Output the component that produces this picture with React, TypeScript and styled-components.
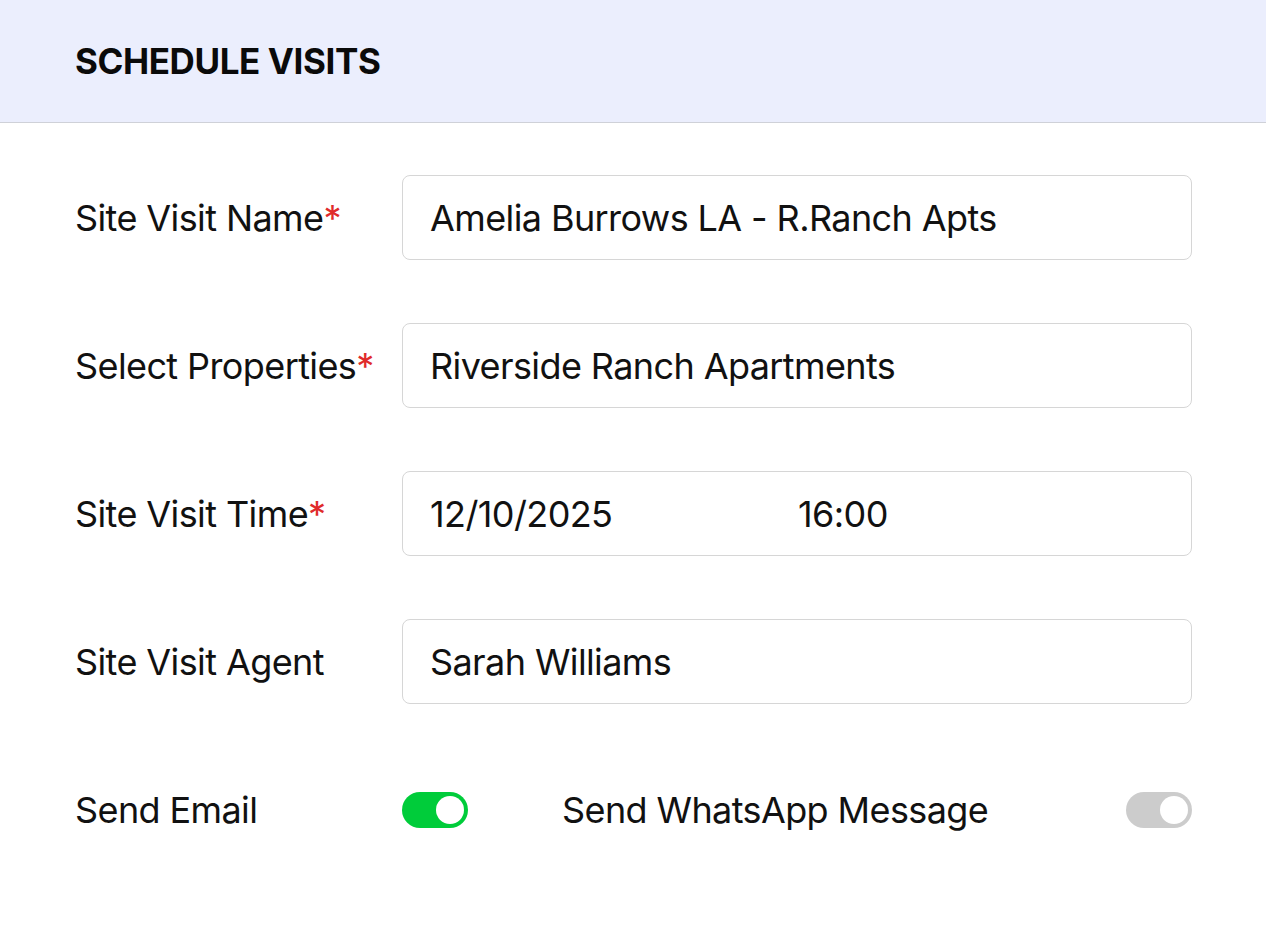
import React from "react";
import styled, { createGlobalStyle } from "styled-components";

const GlobalStyle = createGlobalStyle`
  html, body {
    margin: 0;
    padding: 0;
    background: #ffffff;
    font-family: Inter, "Noto Sans", sans-serif;
    color: #111111;
  }
`;

const fields = [
  { label: "Site Visit Name", required: true, value: "Amelia Burrows LA - R.Ranch Apts" },
  { label: "Select Properties", required: true, value: "Riverside Ranch Apartments" },
  { label: "Site Visit Time", required: true, date: "12/10/2025", time: "16:00" },
  { label: "Site Visit Agent", required: false, value: "Sarah Williams" },
];

const App = () => {
  return (
    <>
      <GlobalStyle />
      <Page>
        <Header>
          <Title>SCHEDULE VISITS</Title>
        </Header>
        <Form>
          {fields.map((f) => (
            <Row key={f.label}>
              <Label>
                {f.label}
                {f.required && <Star>*</Star>}
              </Label>
              <InputBox>
                {f.date ? (
                  <>
                    <DatePart>{f.date}</DatePart>
                    <span>{f.time}</span>
                  </>
                ) : (
                  f.value
                )}
              </InputBox>
            </Row>
          ))}
          <Row>
            <Label>Send Email</Label>
            <ToggleGroup>
              <Toggle $on />
              <ToggleLabel>Send WhatsApp Message</ToggleLabel>
              <Toggle />
            </ToggleGroup>
          </Row>
        </Form>
      </Page>
    </>
  );
};

export default App;

const Page = styled.div`
  width: 1266px;
  min-height: 945px;
  background: #ffffff;
`;

const Header = styled.div`
  height: 122px;
  background: #ebeefd;
  border-bottom: 1px solid #cfd1d8;
  display: flex;
  align-items: center;
  padding-left: 75px;
`;

const Title = styled.h1`
  margin: 0;
  font-size: 35px;
  font-weight: 700;
  letter-spacing: -0.4px;
  color: #0a0a0a;
`;

const Form = styled.div`
  display: flex;
  flex-direction: column;
  gap: 63px;
  padding: 52px 74px 0 75px;
`;

const Row = styled.div`
  display: grid;
  grid-template-columns: 327px 1fr;
  align-items: center;
  height: 85px;
`;

const Label = styled.div`
  font-size: 36px;
  letter-spacing: -0.6px;
  color: #111111;
`;

const Star = styled.span`
  color: #e02b2b;
`;

const InputBox = styled.div`
  box-sizing: border-box;
  height: 85px;
  border: 1.5px solid #d6d6d6;
  border-radius: 8px;
  display: flex;
  align-items: center;
  padding-left: 27px;
  font-size: 36px;
  letter-spacing: -0.6px;
  color: #111111;
`;

const DatePart = styled.span`
  width: 368px;
`;

const ToggleGroup = styled.div`
  display: flex;
  align-items: center;
`;

const ToggleLabel = styled.div`
  flex: 1;
  padding-left: 94px;
  font-size: 36px;
  letter-spacing: -0.6px;
`;

const Toggle = styled.div<{ $on?: boolean }>`
  position: relative;
  width: 66px;
  height: 36px;
  border-radius: 18px;
  background: ${(p) => (p.$on ? "#00cc3a" : "#cccccc")};
  &::after {
    content: "";
    position: absolute;
    top: 4px;
    right: 4px;
    width: 28px;
    height: 28px;
    border-radius: 50%;
    background: #ffffff;
  }
`;
